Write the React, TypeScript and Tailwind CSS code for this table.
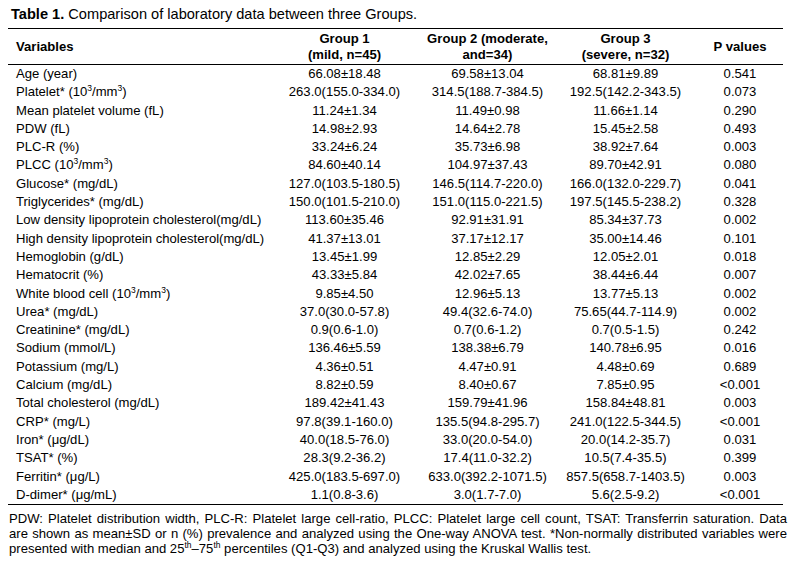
import React from "react";

type Row = { v: React.ReactNode; g1: string; g2: string; g3: string; p: string };

const S = () => <sup className="text-[8.5px] relative -top-[5px]">3</sup>;

const rows: Row[] = [
  { v: "Age (year)", g1: "66.08±18.48", g2: "69.58±13.04", g3: "68.81±9.89", p: "0.541" },
  { v: <>Platelet* (10<S />/mm<S />)</>, g1: "263.0(155.0-334.0)", g2: "314.5(188.7-384.5)", g3: "192.5(142.2-343.5)", p: "0.073" },
  { v: "Mean platelet volume (fL)", g1: "11.24±1.34", g2: "11.49±0.98", g3: "11.66±1.14", p: "0.290" },
  { v: "PDW (fL)", g1: "14.98±2.93", g2: "14.64±2.78", g3: "15.45±2.58", p: "0.493" },
  { v: "PLC-R (%)", g1: "33.24±6.24", g2: "35.73±6.98", g3: "38.92±7.64", p: "0.003" },
  { v: <>PLCC (10<S />/mm<S />)</>, g1: "84.60±40.14", g2: "104.97±37.43", g3: "89.70±42.91", p: "0.080" },
  { v: "Glucose* (mg/dL)", g1: "127.0(103.5-180.5)", g2: "146.5(114.7-220.0)", g3: "166.0(132.0-229.7)", p: "0.041" },
  { v: "Triglycerides* (mg/dL)", g1: "150.0(101.5-210.0)", g2: "151.0(115.0-221.5)", g3: "197.5(145.5-238.2)", p: "0.328" },
  { v: "Low density lipoprotein cholesterol(mg/dL)", g1: "113.60±35.46", g2: "92.91±31.91", g3: "85.34±37.73", p: "0.002" },
  { v: "High density lipoprotein cholesterol(mg/dL)", g1: "41.37±13.01", g2: "37.17±12.17", g3: "35.00±14.46", p: "0.101" },
  { v: "Hemoglobin (g/dL)", g1: "13.45±1.99", g2: "12.85±2.29", g3: "12.05±2.01", p: "0.018" },
  { v: "Hematocrit (%)", g1: "43.33±5.84", g2: "42.02±7.65", g3: "38.44±6.44", p: "0.007" },
  { v: <>White blood cell (10<S />/mm<S />)</>, g1: "9.85±4.50", g2: "12.96±5.13", g3: "13.77±5.13", p: "0.002" },
  { v: "Urea* (mg/dL)", g1: "37.0(30.0-57.8)", g2: "49.4(32.6-74.0)", g3: "75.65(44.7-114.9)", p: "0.002" },
  { v: "Creatinine* (mg/dL)", g1: "0.9(0.6-1.0)", g2: "0.7(0.6-1.2)", g3: "0.7(0.5-1.5)", p: "0.242" },
  { v: "Sodium (mmol/L)", g1: "136.46±5.59", g2: "138.38±6.79", g3: "140.78±6.95", p: "0.016" },
  { v: "Potassium (mg/L)", g1: "4.36±0.51", g2: "4.47±0.91", g3: "4.48±0.69", p: "0.689" },
  { v: "Calcium (mg/dL)", g1: "8.82±0.59", g2: "8.40±0.67", g3: "7.85±0.95", p: "<0.001" },
  { v: "Total cholesterol (mg/dL)", g1: "189.42±41.43", g2: "159.79±41.96", g3: "158.84±48.81", p: "0.003" },
  { v: "CRP* (mg/L)", g1: "97.8(39.1-160.0)", g2: "135.5(94.8-295.7)", g3: "241.0(122.5-344.5)", p: "<0.001" },
  { v: "Iron* (μg/dL)", g1: "40.0(18.5-76.0)", g2: "33.0(20.0-54.0)", g3: "20.0(14.2-35.7)", p: "0.031" },
  { v: "TSAT* (%)", g1: "28.3(9.2-36.2)", g2: "17.4(11.0-32.2)", g3: "10.5(7.4-35.5)", p: "0.399" },
  { v: "Ferritin* (μg/L)", g1: "425.0(183.5-697.0)", g2: "633.0(392.2-1071.5)", g3: "857.5(658.7-1403.5)", p: "0.003" },
  { v: "D-dimer* (μg/mL)", g1: "1.1(0.8-3.6)", g2: "3.0(1.7-7.0)", g3: "5.6(2.5-9.2)", p: "<0.001" },
];

const cols = "grid grid-cols-[264px_145px_141px_135px_90px]";

export default function App() {
  return (
    <div
      className="w-[797px] h-[567px] bg-white text-black text-[13.1px] overflow-hidden"
      style={{ fontFamily: '"Liberation Sans", Arial, sans-serif' }}
    >
      <div className="pl-[11px] pt-[6px] leading-[17px] text-[14.6px]">
        <span className="font-bold">Table 1.</span> Comparison of laboratory data between three Groups.
      </div>
      <div className="ml-[8px] w-[775px] mt-[5px] border-t-[1.5px] border-black">
        <div className={`${cols} h-[36px] border-b-[1.5px] border-black font-bold leading-[16px]`}>
          <div className="flex items-center pl-[8px]">Variables</div>
          <div className="flex items-center justify-center text-center">
            Group 1<br />(mild, n=45)
          </div>
          <div className="flex items-center justify-center text-center">
            Group 2 (moderate,<br />and=34)
          </div>
          <div className="flex items-center justify-center text-center">
            Group 3<br />(severe, n=32)
          </div>
          <div className="flex items-center justify-center text-center pl-[4px]">P values</div>
        </div>
        <div>
          {rows.map((r, i) => (
            <div key={i} className={`${cols} h-[18.3px] leading-[18.3px]`}>
              <div className="pl-[8px] whitespace-nowrap">{r.v}</div>
              <div className="text-center">{r.g1}</div>
              <div className="text-center">{r.g2}</div>
              <div className="text-center">{r.g3}</div>
              <div className="text-center pl-[4px]">{r.p}</div>
            </div>
          ))}
        </div>
        <div className={`${cols} border-t-[1.5px] border-black`}>
          <div className="border-r border-black h-[1px] -mt-[1px]" />
          <div className="border-r border-black h-[1px] -mt-[1px]" />
          <div className="border-r border-black h-[1px] -mt-[1px]" />
          <div className="border-r border-black h-[1px] -mt-[1px]" />
          <div />
        </div>
      </div>
      <div className="ml-[9px] w-[778px] mt-[6px] leading-[15px] text-[13.1px]">
        <div className="text-justify [text-align-last:justify]">
          PDW: Platelet distribution width, PLC-R: Platelet large cell-ratio, PLCC: Platelet large cell count, TSAT:
          Transferrin saturation. Data
        </div>
        <div className="text-justify [text-align-last:justify]">
          are shown as mean±SD or n (%) prevalence and analyzed using the One-way ANOVA test. *Non-normally
          distributed variables were
        </div>
        <div>
          presented with median and 25<sup className="text-[8.5px] relative -top-[5px]">th</sup>–75
          <sup className="text-[8.5px] relative -top-[5px]">th</sup> percentiles (Q1-Q3) and analyzed using the
          Kruskal Wallis test.
        </div>
      </div>
    </div>
  );
}
